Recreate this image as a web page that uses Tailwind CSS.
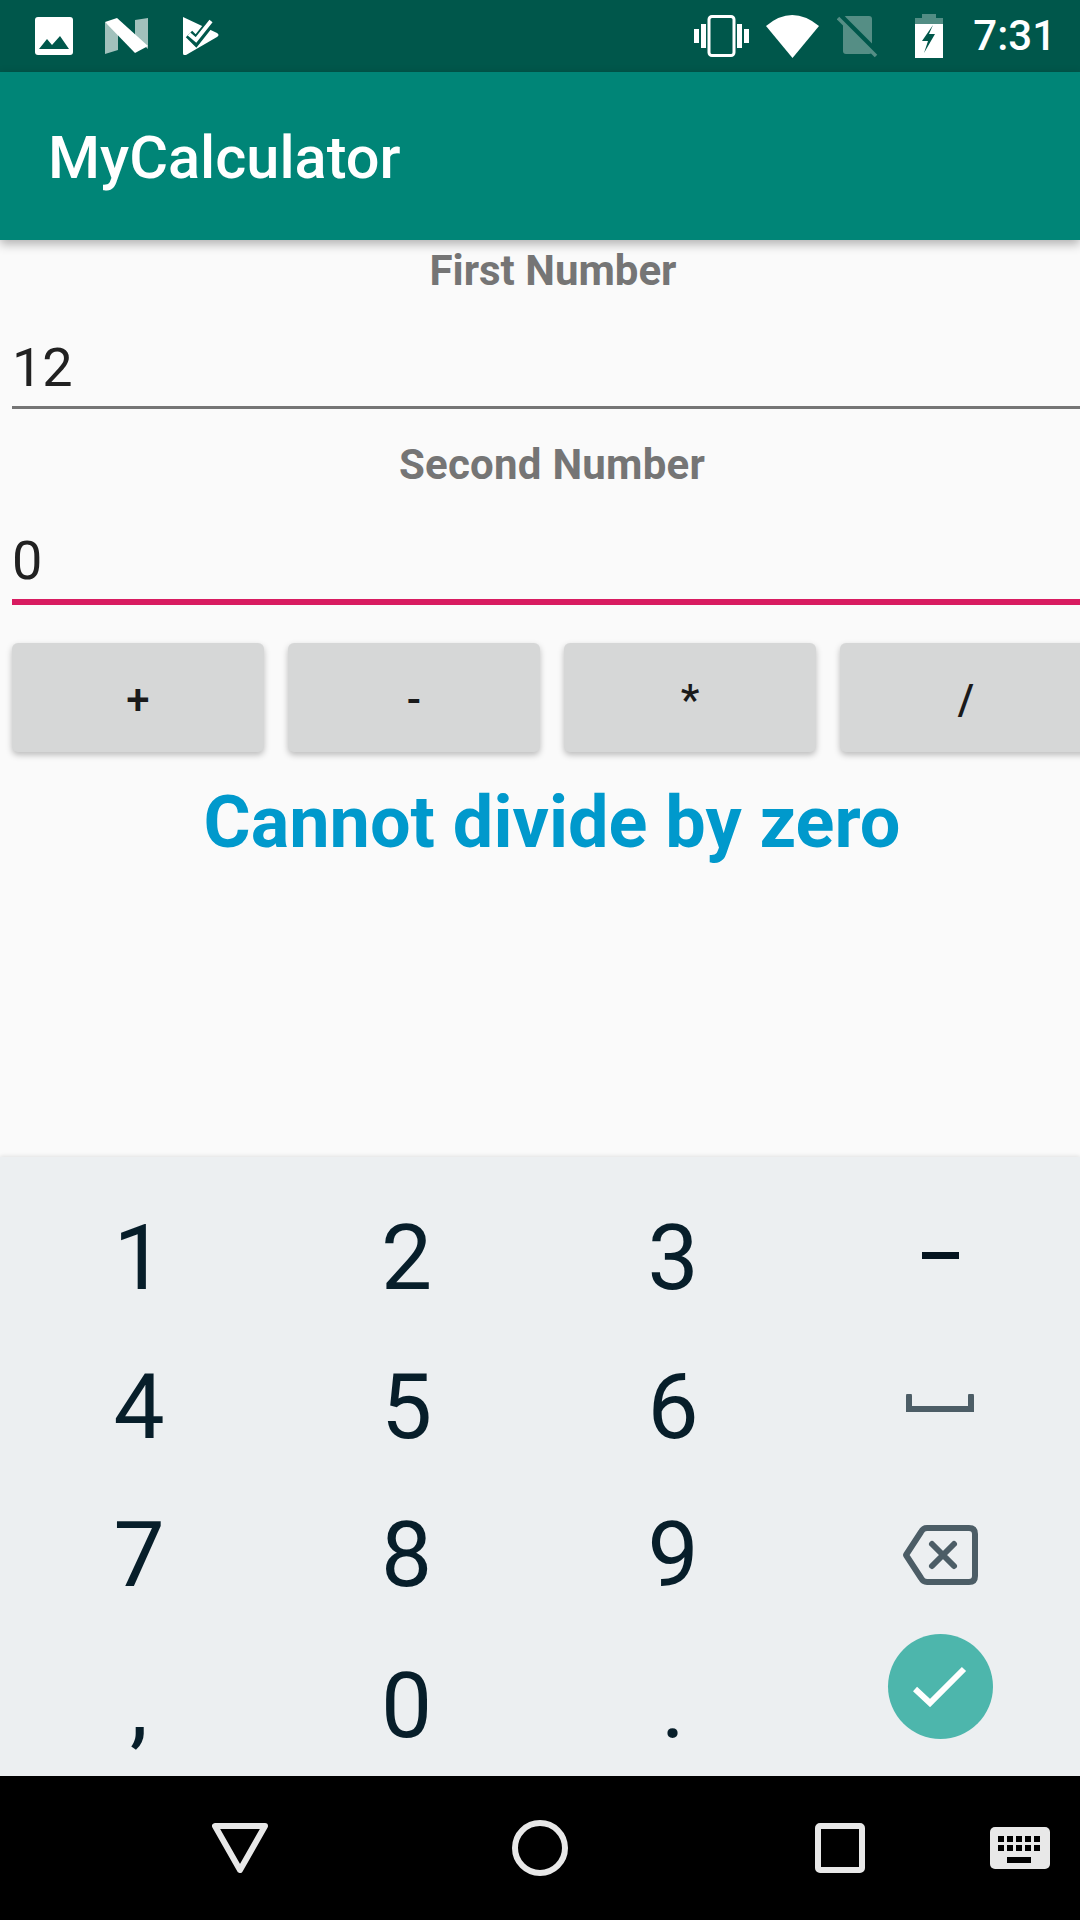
<!DOCTYPE html>
<html lang="en">
<head>
    <meta charset="UTF-8">
    <title>MyCalculator</title>
    <script src="https://cdn.jsdelivr.net/npm/@tailwindcss/browser@4"></script>
</head>
<body class="bg-[#fafafa] font-['Roboto',sans-serif]">
<div class="w-[1080px] h-[1920px] overflow-hidden flex flex-col">
    <!-- Status bar -->
    <div class="h-[72px] bg-[#00574b] flex items-center shrink-0">
        <svg class="ml-[35px]" width="38" height="38" viewBox="0 0 38 38"><rect width="38" height="38" rx="3" fill="#fff"/><path d="M4 32 L12 22 L17 28 L25 19 L34 32 Z" fill="#00574b"/></svg>
        <svg class="ml-[32px]" width="43" height="36" viewBox="0 0 43 36"><path d="M0 4 L0 36 L13 32 L13 14 Z" fill="#fff" fill-opacity=".63"/><path d="M30 2 L43 0 L43 31 L30 20 Z" fill="#fff" fill-opacity=".63"/><path d="M0 4 L12 0 L43 28 L30 35 Z" fill="#fff"/></svg>
        <svg class="ml-[34px]" width="38" height="38" viewBox="0 0 38 38"><path d="M1 2 L1 36 Q1 39 4 38 L35 20 Q38 18 35 16 L1 0 Z" fill="#fff"/><path d="M7 17 L14 24 L29 5" fill="none" stroke="#00574b" stroke-width="9"/><path d="M7 17 L14 23 L29 4" fill="none" stroke="#fff" stroke-width="4"/></svg>
        <div class="flex-1"></div>
        <svg width="55" height="42" viewBox="0 0 55 42"><rect x="0" y="14" width="5" height="14" fill="#fff"/><rect x="50" y="14" width="5" height="14" fill="#fff"/><rect x="15" y="1.500" width="25" height="39" rx="3" fill="none" stroke="#fff" stroke-width="3"/><rect x="7" y="9" width="5" height="24" fill="#fff"/><rect x="43" y="9" width="5" height="24" fill="#fff"/></svg>
        <svg class="ml-[17px]" width="53" height="43" viewBox="0 0 53 43"><path d="M0 11 Q26 -11 53 11 L26.500 43 Z" fill="#fff"/></svg>
        <svg class="ml-[18px]" width="42" height="44" viewBox="0 0 42 44"><path d="M6 5 Q6 2 9 2 L32 2 Q35 2 35 5 L35 37 Q35 40 32 40 L9 40 Q6 40 6 37 Z" fill="#558e85"/><path d="M3 1 L41 39" stroke="#00574b" stroke-width="5"/><path d="M1 4 L39 42" stroke="#558e85" stroke-width="3.500"/></svg>
        <svg class="ml-[36px]" width="28" height="44" viewBox="0 0 28 44"><path d="M7 0 L21 0 L21 4 L28 4 L28 10 L0 10 L0 4 L7 4 Z" fill="#fff" fill-opacity=".32"/><path d="M0 10 L28 10 L28 44 L0 44 Z" fill="#fff"/><path d="M18 11 L7 27 L13 27 L9 39 L20 20 L14 20 Z" fill="#00574b"/></svg>
        <div class="ml-[30px] mr-[24px] text-[42px] leading-none font-medium text-white">7:31</div>
    </div>
    <!-- App bar -->
    <div class="h-[168px] bg-[#008577] flex items-center pl-[48px] pt-[5px] shrink-0 shadow-[0_4px_10px_rgba(0,0,0,0.3)] relative">
        <div class="text-[59.5px] leading-none font-medium text-white">MyCalculator</div>
    </div>
    <!-- Form, wider than the screen as in the app -->
    <div class="w-[1104px] flex-1 flex flex-col">
        <div class="h-[56px] mt-[2px] pl-[2px] flex items-center justify-center text-[42px] font-bold text-[#757575]">First Number</div>
        <div class="mx-[12px] mt-[13px] h-[98px] border-b-[3px] border-[#757575] text-[54px] text-[#212121] leading-[64px] pt-[25px]">12</div>
        <div class="h-[56px] mt-[27px] flex items-center justify-center text-[42px] font-bold tracking-[0.25px] text-[#757575]">Second Number</div>
        <div class="mx-[12px] mt-[12px] h-[101px] border-b-[6px] border-[#d81b60] text-[54px] text-[#212121] leading-[64px] pt-[25px]">0</div>
        <div class="flex gap-[24px] pl-[12px] mt-[38px]">
            <div class="w-[252px] h-[109px] shrink-0 pt-[3px] bg-[#d6d7d7] rounded-[6px] shadow-[0_3px_6px_rgba(0,0,0,0.25)] flex items-center justify-center text-[42px] font-medium text-[#1a1a1a]">+</div>
            <div class="w-[252px] h-[109px] shrink-0 pt-[3px] bg-[#d6d7d7] rounded-[6px] shadow-[0_3px_6px_rgba(0,0,0,0.25)] flex items-center justify-center text-[42px] font-medium text-[#1a1a1a]">-</div>
            <div class="w-[252px] h-[109px] shrink-0 pt-[3px] bg-[#d6d7d7] rounded-[6px] shadow-[0_3px_6px_rgba(0,0,0,0.25)] flex items-center justify-center text-[42px] font-medium text-[#1a1a1a]">*</div>
            <div class="w-[252px] h-[109px] shrink-0 pt-[3px] bg-[#d6d7d7] rounded-[6px] shadow-[0_3px_6px_rgba(0,0,0,0.25)] flex items-center justify-center text-[42px] font-medium text-[#1a1a1a]">/</div>
        </div>
        <div class="mt-[29px] text-center text-[72px] font-bold text-[#0099cc] leading-[84px]">Cannot divide by zero</div>
    </div>
    <!-- Keyboard -->
    <div class="h-[619px] bg-[#eceff1] shrink-0 grid grid-cols-[270px_265px_268px_266px] grid-rows-[149.5px_149.5px_149.5px_149.5px] pl-[4px] pt-[24px] text-[91px] leading-none text-[#071e2a] shadow-[0_-1px_4px_rgba(0,0,0,0.1)]">
        <div class="flex items-center justify-center pt-[5px]">1</div>
        <div class="flex items-center justify-center pt-[5px]">2</div>
        <div class="flex items-center justify-center pt-[5px]">3</div>
        <div class="flex items-center justify-center"><div class="w-[37px] h-[7px] bg-[#04141f]"></div></div>
        <div class="flex items-center justify-center pt-[5px]">4</div>
        <div class="flex items-center justify-center pt-[5px]">5</div>
        <div class="flex items-center justify-center pt-[5px]">6</div>
        <div class="flex items-center justify-center">
            <svg class="mb-[4px]" width="68" height="18" viewBox="0 0 68 18"><path d="M3 2 L3 15 L65 15 L65 2" fill="none" stroke="#4c5d66" stroke-width="6" stroke-linecap="round"/></svg>
        </div>
        <div class="flex items-center justify-center pt-[2px]">7</div>
        <div class="flex items-center justify-center pt-[2px]">8</div>
        <div class="flex items-center justify-center pt-[2px]">9</div>
        <div class="flex items-center justify-center">
            <svg width="76" height="60" viewBox="0 0 76 60"><path d="M4 30 L19 7 Q21 3 25 3 L67 3 Q73 3 73 9 L73 51 Q73 57 67 57 L25 57 Q21 57 19 53 Z" fill="none" stroke="#4c5d66" stroke-width="6" stroke-linejoin="round"/><path d="M30 19 L52 41 M52 19 L30 41" stroke="#4c5d66" stroke-width="6" stroke-linecap="round"/></svg>
        </div>
        <div class="flex items-center justify-center pt-[5px]">,</div>
        <div class="flex items-center justify-center pt-[5px]">0</div>
        <div class="flex items-center justify-center pt-[5px]">.</div>
        <div class="flex items-start justify-center pt-[4px]">
            <div class="w-[105px] h-[105px] rounded-full bg-[#4db6ac] flex items-center justify-center">
                <svg width="54" height="42" viewBox="0 0 54 42"><path d="M2 24 L17 38 L51 4" fill="none" stroke="#fff" stroke-width="6"/></svg>
            </div>
        </div>
    </div>
    <!-- Nav bar -->
    <div class="h-[144px] bg-black shrink-0 flex items-center">
        <svg class="ml-[212px]" width="56" height="50" viewBox="0 0 56 50"><path d="M3 3 L53 3 L28 47 Z" fill="none" stroke="#e8e8e8" stroke-width="6" stroke-linejoin="round"/></svg>
        <svg class="ml-[244px]" width="56" height="56" viewBox="0 0 56 56"><circle cx="28" cy="28" r="25" fill="none" stroke="#e8e8e8" stroke-width="6"/></svg>
        <svg class="ml-[247px]" width="50" height="50" viewBox="0 0 50 50"><rect x="3" y="3" width="44" height="44" rx="2" fill="none" stroke="#e8e8e8" stroke-width="6"/></svg>
        <svg class="ml-[125px]" width="60" height="42" viewBox="0 0 60 42"><rect width="60" height="42" rx="5" fill="#e8e8e8"/><g fill="#000"><rect x="8" y="9" width="6" height="6"/><rect x="17" y="9" width="6" height="6"/><rect x="26" y="9" width="6" height="6"/><rect x="35" y="9" width="6" height="6"/><rect x="44" y="9" width="6" height="6"/><rect x="8" y="18" width="6" height="6"/><rect x="17" y="18" width="6" height="6"/><rect x="26" y="18" width="6" height="6"/><rect x="35" y="18" width="6" height="6"/><rect x="44" y="18" width="6" height="6"/><rect x="17" y="30" width="24" height="6"/></g></svg>
    </div>
</div>
</body>
</html>
